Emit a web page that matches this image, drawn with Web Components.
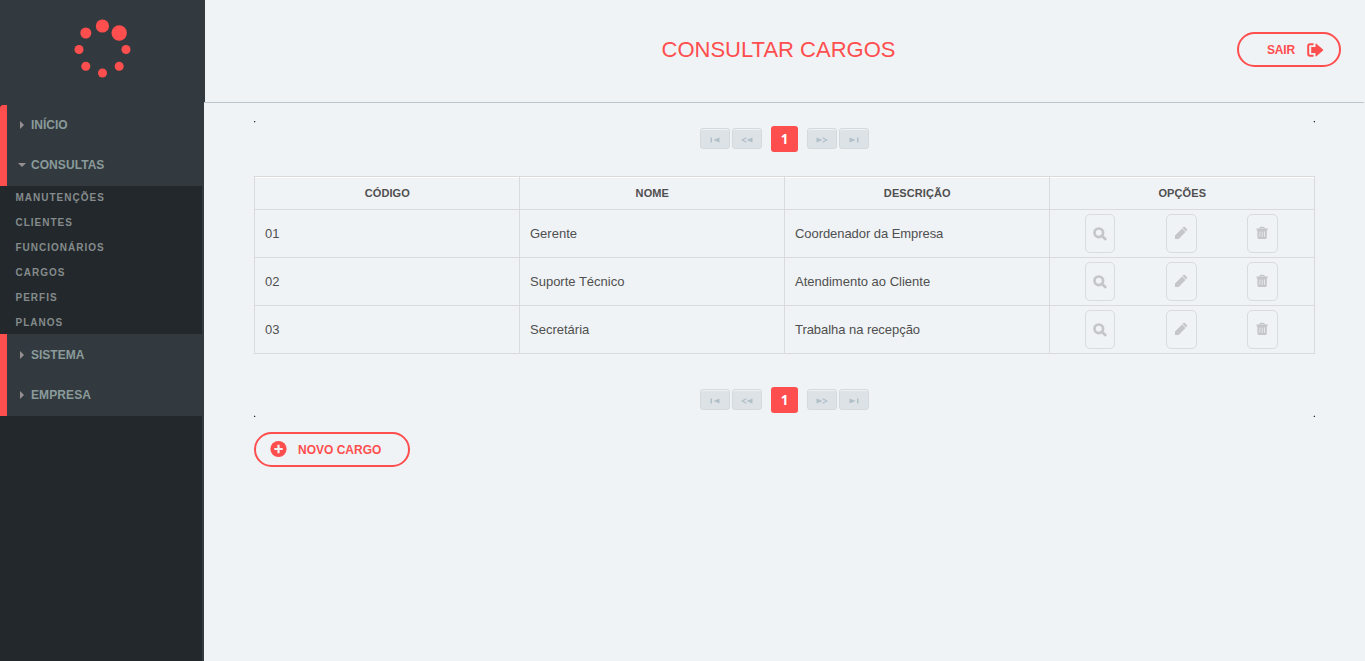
<!DOCTYPE html>
<html lang="pt-BR">
<head>
<meta charset="utf-8">
<title>Consultar Cargos</title>
<style>
html,body{margin:0;height:100%;overflow:hidden;background:#eff3f6;font-family:"Liberation Sans",Arial,sans-serif}
</style>
</head>
<body>
<cargos-page></cargos-page>
<script>
const define = (name, render) => customElements.define(name, class extends HTMLElement {
  connectedCallback() {
    if (this.shadowRoot) return;
    this.attachShadow({ mode: 'open' }).innerHTML = render(this);
  }
});

const ICONS = {
  search: '<svg width="14" height="14" viewBox="0 0 14 14"><circle cx="5.8" cy="5.8" r="4.3" fill="none" stroke="currentColor" stroke-width="2.7"/><path d="M9 9L12.3 12.1" stroke="currentColor" stroke-width="2.8" stroke-linecap="round"/></svg>',
  edit: '<svg width="14" height="14" viewBox="0 0 14 14"><path fill="currentColor" d="M1 9.4L8 2.4L11.6 6L4.6 13H1.6Q1 13 1 12.4zM8.5 1.9L9.4 1Q10.2.3 11 1L12.9 2.9Q13.6 3.7 12.9 4.5L12.1 5.5z"/></svg>',
  trash: '<svg width="14" height="14" viewBox="0 0 14 14"><path fill="currentColor" fill-rule="evenodd" d="M1.5 2.6H4.3L5 1.1Q5.2.8 5.6.8H8.6Q9 .8 9.2 1.1L9.9 2.6H12.7V4.2H11.8V11.6Q11.8 13 10.4 13H3.8Q2.4 13 2.4 11.6V4.2H1.5zM5.7 2.6H8.5L8.3 2H5.9zM4.5 5.5V11H5.2V5.5zM6.8 5.5V11H7.5V5.5zM9 5.5V11H9.7V5.5z"/></svg>',
  exit: '<svg width="17" height="14" viewBox="0 0 17 14"><path d="M6.5 1.2H3Q1.2 1.2 1.2 3V11Q1.2 12.8 3 12.8H6.5" fill="none" stroke="currentColor" stroke-width="2"/><path fill="currentColor" d="M4.2 4.1H8.5V1.2Q8.5.2 9.4.8L16 6.4Q16.6 7 16 7.6L9.4 13.2Q8.5 13.8 8.5 12.8V9.9H4.2z"/></svg>',
  plus: '<svg width="17" height="17" viewBox="0 0 17 17"><circle cx="8.5" cy="8" r="8.1" fill="currentColor"/><path d="M8.5 3.8V12.2M4.3 8H12.7" stroke="#eff3f6" stroke-width="2.2"/></svg>',
  first: '<svg width="10" height="6" viewBox="0 0 10 6"><path fill="currentColor" d="M.5.5H2V5.5H.5zM9.5.5V5.5L3.5 3z"/></svg>',
  prev: '<svg width="12" height="6" viewBox="0 0 12 6"><path d="M5.3.7L1.2 3L5.3 5.3" fill="none" stroke="currentColor" stroke-width="1.2"/><path fill="currentColor" d="M11.5.5V5.5L5.5 3z"/></svg>',
  next: '<svg width="12" height="6" viewBox="0 0 12 6"><path d="M6.7.7L10.8 3L6.7 5.3" fill="none" stroke="currentColor" stroke-width="1.2"/><path fill="currentColor" d="M.5.5V5.5L6.5 3z"/></svg>',
  last: '<svg width="10" height="6" viewBox="0 0 10 6"><path fill="currentColor" d="M8 .5H9.5V5.5H8zM.5.5V5.5L6.5 3z"/></svg>'
};

define('ui-icon', el => `<style>:host{display:block;line-height:0}svg{display:block;overflow:visible}</style>${ICONS[el.getAttribute('name')]}`);

define('app-logo', () => `
<style>:host{display:block;width:205px;height:102px;background:#323a3f}svg{display:block}</style>
<svg width="205" height="102" viewBox="0 0 205 102" fill="#ff4e4e"><circle cx="102.4" cy="26" r="6.6"/><circle cx="119.2" cy="33" r="7.7"/><circle cx="126" cy="49.5" r="4.5"/><circle cx="119.2" cy="66.2" r="4.5"/><circle cx="102.5" cy="73" r="4.5"/><circle cx="85.8" cy="66.2" r="4.5"/><circle cx="79" cy="49.5" r="4.5"/><circle cx="85.8" cy="33" r="5.5"/></svg>`);

define('menu-group', () => `
<style>
:host{display:block;box-sizing:border-box;border-left:7px solid #ff4e4e;background:#323a3f}
:host([top]){border-top-left-radius:3px}
</style><slot></slot>`);

define('menu-item', el => `
<style>
:host{display:flex;align-items:center;height:40px;font-weight:bold;font-size:12px;color:#8a9a9a}
.arrow{width:11px;margin-left:9px;display:flex;justify-content:center;margin-right:4px}
svg{display:block}
.label{white-space:nowrap;letter-spacing:var(--track,0)}
</style>
<span class="arrow">${el.hasAttribute('open')
  ? '<svg width="8" height="4"><path d="M0 0H8L4 4z" fill="#958f91"/></svg>'
  : '<svg width="4" height="8"><path d="M0 0V8L4 4z" fill="#958f91"/></svg>'}</span><span class="label"><slot></slot></span>`);

define('sub-item', () => `
<style>:host{display:flex;align-items:center;box-sizing:border-box;height:25px;padding:0 0 2px 15.5px;font-weight:bold;font-size:10px;color:#858b8c;letter-spacing:1px;white-space:nowrap}</style><slot></slot>`);

define('side-bar', () => `
<style>
:host{display:flex;flex-direction:column;width:204px;height:661px;flex:none}
app-logo{flex:none}
.body{flex:1;box-sizing:border-box;border-right:2px solid #323a3f;background:#22282b}
.gap{height:3px;background:#323a3f}
menu-group:first-of-type{height:81px}
.sub{height:148px;box-sizing:border-box;overflow:hidden}
.second{height:82px;padding-top:1px}
</style>
<app-logo></app-logo>
<div class="body"><div class="gap"></div>
<menu-group top><menu-item>INÍCIO</menu-item><menu-item open style="--track:.06px">CONSULTAS</menu-item></menu-group>
<div class="sub"><sub-item>MANUTENÇÕES</sub-item><sub-item>CLIENTES</sub-item><sub-item>FUNCIONÁRIOS</sub-item><sub-item>CARGOS</sub-item><sub-item>PERFIS</sub-item><sub-item>PLANOS</sub-item></div>
<menu-group class="second"><menu-item>SISTEMA</menu-item><menu-item style="--track:.1px">EMPRESA</menu-item></menu-group>
</div>`);

define('pill-button', () => `
<style>
:host{display:flex;align-items:center;box-sizing:border-box;height:35px;border:2px solid #ff4e4e;border-radius:18px;color:#ff4e4e;font-weight:bold;font-size:12px;white-space:nowrap}
</style><slot></slot>`);

define('page-header', () => `
<style>
:host{display:grid;grid-template-columns:1fr auto 1fr;box-sizing:border-box;height:103px;border-bottom:1px solid #bcc6cd;padding-right:23px;margin-right:1px;align-items:start}
h1{grid-column:2;margin:37px 0 0;font-weight:normal;font-size:22px;line-height:26px;color:#ff4e4e;white-space:nowrap;transform:translateX(6px)}
pill-button{justify-self:end;margin-top:32px;width:104px;padding-left:28px}
span{letter-spacing:-.2px}
ui-icon{margin-left:12px}
</style>
<h1>CONSULTAR CARGOS</h1><pill-button><span>SAIR</span><ui-icon name="exit"></ui-icon></pill-button>`);

define('page-step', el => `
<style>:host{display:flex;align-items:center;justify-content:center;box-sizing:border-box;width:30px;height:21px;margin-bottom:1px;border:1px solid #d3d9dd;border-radius:3px;background:#dde2e6;box-shadow:inset 0 1px #eff2f4;color:#b1bfc9;padding-top:2px}</style><ui-icon name="${el.getAttribute('icon')}"></ui-icon>`);

define('page-nav', () => `
<style>
:host{display:flex;justify-content:center;align-items:center;height:26px}
page-step+page-step{margin-left:2px}
b{width:27px;height:26px;margin:0 9px;border-radius:3px;background:#ff4e4e;color:#fff;font-family:"Open Sans","Liberation Sans",sans-serif;font-size:13.5px;line-height:26px;text-align:center}
</style>
<page-step icon="first"></page-step><page-step icon="prev"></page-step><b>1</b><page-step icon="next"></page-step><page-step icon="last"></page-step>`);

define('icon-button', el => `
<style>:host{display:flex;align-items:center;justify-content:center;box-sizing:border-box;width:31px;height:39px;border:1px solid #d9dbdd;border-radius:5px;color:#c5c6c7;padding:0 1px 1px 0}:host([icon=search]){padding:0}</style><ui-icon name="${el.getAttribute('icon')}"></ui-icon>`);

define('data-row', el => el.hasAttribute('head') ? `
<style>
:host{display:grid;grid-template-columns:repeat(4,265px);height:33px;box-sizing:border-box;border-bottom:1px solid #d9dadc;box-shadow:inset 0 1px #fff}
::slotted(*){display:block;border-right:1px solid #d9dadc;text-align:center;font-weight:bold;font-size:11px;line-height:33px;letter-spacing:.1px;text-indent:.6px;color:#4f4f4f}
</style><slot></slot>` : `
<style>
:host{display:grid;grid-template-columns:repeat(4,265px);height:48px;box-sizing:border-box;border-bottom:1px solid #d9dadc}
::slotted(*){display:block;border-right:1px solid #d9dadc;padding-left:10px;font-size:13px;line-height:47px;color:#4f4f4f}
.ops{border-right:1px solid #d9dadc;display:flex;gap:50px;padding:4px 0 0 35px}
icon-button:first-child{width:30px;margin-right:1px}
</style><slot></slot><div class="ops"><icon-button icon="search"></icon-button><icon-button icon="edit"></icon-button><icon-button icon="trash"></icon-button></div>`);

define('data-table', () => `
<style>:host{display:block;box-sizing:border-box;width:1061px;border-left:1px solid #d9dadc;border-top:1px solid #d9dadc}</style><slot></slot>`);

define('list-panel', () => `
<style>
:host{display:flex;flex-direction:column;width:1061px;height:296px}
.marks{display:flex;justify-content:space-between;height:5px}
.marks.end{align-items:flex-end;height:4px}
i{width:2px;height:2px;background:linear-gradient(#22282b,#22282b) 0 0/1px 1px no-repeat,#b4b8bb;clip-path:polygon(0 0,2px 0,2px 1px,1px 1px,1px 2px,0 2px)}
i:last-child{transform:scaleX(-1)}
.end i{transform:scaleY(-1)}
.end i:last-child{transform:scale(-1)}
data-table{margin:24px 0 33px}
</style>
<div class="marks"><i></i><i></i></div>
<page-nav></page-nav>
<data-table>
<data-row head><span>CÓDIGO</span><span>NOME</span><span>DESCRIÇÃO</span><span>OPÇÕES</span></data-row>
<data-row><span>01</span><span>Gerente</span><span style="letter-spacing:-.06px">Coordenador da Empresa</span></data-row>
<data-row><span>02</span><span>Suporte Técnico</span><span>Atendimento ao Cliente</span></data-row>
<data-row><span>03</span><span>Secretária</span><span style="letter-spacing:-.05px">Trabalha na recepção</span></data-row>
</data-table>
<page-nav></page-nav>
<div class="marks end"><i></i><i></i></div>`);

define('cargos-page', () => `
<style>
:host{display:flex;height:661px}
main{flex:1;min-width:0}
.content{padding:18px 0 0 50px}
.new{width:156px;margin-top:15px;padding-left:14px}
.new ui-icon{margin-right:11px}
</style>
<side-bar></side-bar>
<main><page-header></page-header>
<div class="content"><list-panel></list-panel>
<pill-button class="new"><ui-icon name="plus"></ui-icon><span>NOVO CARGO</span></pill-button></div></main>`);
</script>
</body>
</html>
